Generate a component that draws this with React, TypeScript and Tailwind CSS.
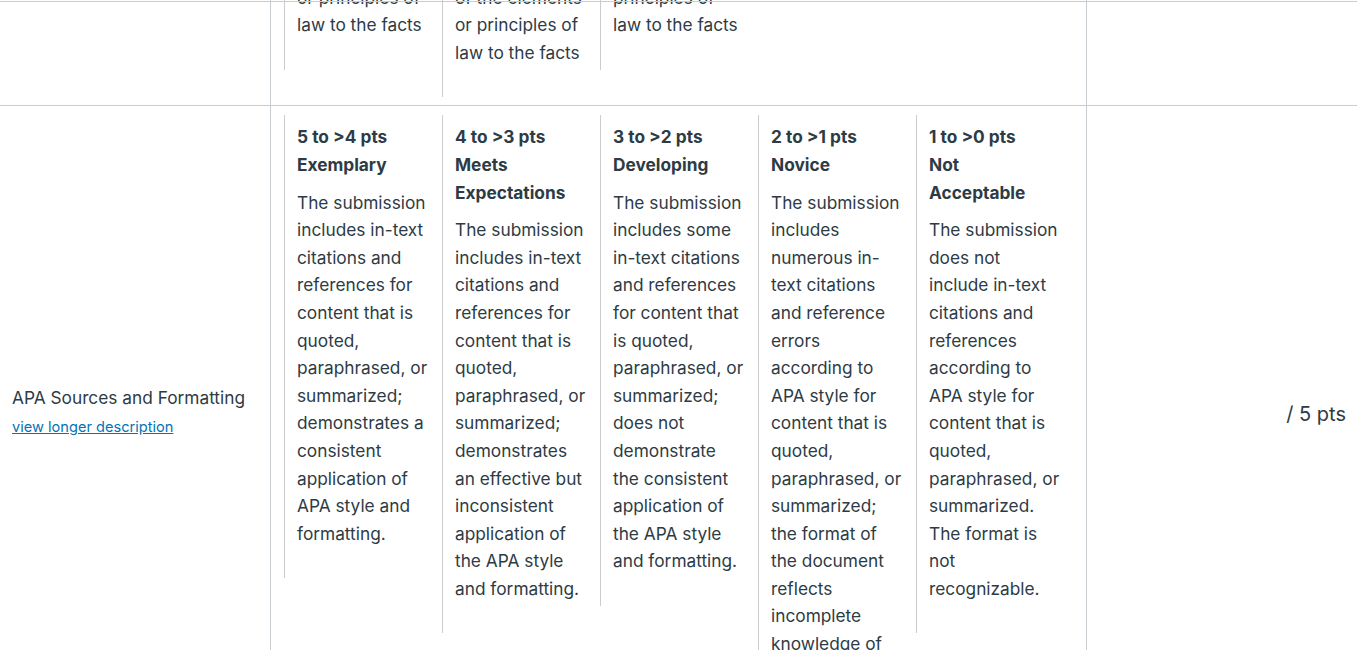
import React from 'react';

const topCells = [
    ['application of', 'or principles of', 'law to the facts'],
    ['application', 'of the elements', 'or principles of', 'law to the facts'],
    ['the elements or', 'principles of', 'law to the facts'],
];

const ratings = [
    {
        pts: '5 to >4 pts',
        title: 'Exemplary',
        desc: 'The submission includes in-text citations and references for content that is quoted, paraphrased, or summarized; demonstrates a consistent application of APA style and formatting.',
    },
    {
        pts: '4 to >3 pts',
        title: 'Meets Expectations',
        desc: 'The submission includes in-text citations and references for content that is quoted, paraphrased, or summarized; demonstrates an effective but inconsistent application of the APA style and formatting.',
    },
    {
        pts: '3 to >2 pts',
        title: 'Developing',
        desc: 'The submission includes some in-text citations and references for content that is quoted, paraphrased, or summarized; does not demonstrate the consistent application of the APA style and formatting.',
    },
    {
        pts: '2 to >1 pts',
        title: 'Novice',
        desc: 'The submission includes numerous in-text citations and reference errors according to APA style for content that is quoted, paraphrased, or summarized; the format of the document reflects incomplete knowledge of APA style.',
    },
    {
        pts: '1 to >0 pts',
        title: 'Not Acceptable',
        desc: 'The submission does not include in-text citations and references according to APA style for content that is quoted, paraphrased, or summarized. The format is not recognizable.',
    },
];

const App = () => {
    return (
        <div className="relative h-[650px] overflow-hidden bg-white text-[#2d3b45] font-['Inter',sans-serif]">
            {/* thin top rule */}
            <div className="absolute top-[1px] left-0 right-0 h-px bg-[#c7cdd1] z-10" />

            <div className="-mt-[61px]">
                {/* previous criterion (cut off) */}
                <div className="grid grid-cols-[271px_816px_1fr] border-b border-[#c7cdd1]">
                    <div className="border-r border-[#c7cdd1]" />
                    <div className="flex items-start pl-[13px] pr-3 pt-[9px] pb-2 border-r border-[#c7cdd1]">
                        {topCells.map((lines, i) => (
                            <div key={i} className="w-[158px] shrink-0 border-l border-[#c7cdd1] px-3 pt-2 pb-[31px] text-[17.3px] leading-[27.6px]">
                                {lines.map((l) => (
                                    <span key={l} className="block whitespace-nowrap">{l}</span>
                                ))}
                            </div>
                        ))}
                    </div>
                    <div />
                </div>

                {/* APA row */}
                <div className="grid grid-cols-[271px_816px_1fr] border-b border-[#c7cdd1]">
                    <div className="flex flex-col justify-center pl-3 pr-3 pb-1 border-r border-[#c7cdd1]">
                        <span className="text-[17.3px] leading-[28px]">APA Sources and Formatting</span>
                        <a href="#" className="text-[14.6px] leading-[30px] text-[#0374b5] underline">view longer description</a>
                    </div>
                    <div className="flex items-start pl-[13px] pr-3 pt-[9px] pb-2 border-r border-[#c7cdd1]">
                        {ratings.map((r) => (
                            <div key={r.pts} className="w-[158px] shrink-0 border-l border-[#c7cdd1] px-3 pt-2 pb-[31px] text-[17.3px] leading-[27.6px]">
                                <div className="font-bold">{r.pts}</div>
                                <div className="font-bold max-w-[120px] mb-[10px]">{r.title}</div>
                                <p>{r.desc}</p>
                            </div>
                        ))}
                    </div>
                    <div className="flex items-center justify-end pr-[11px] pb-[2px] text-[20px]">
                        / 5 pts
                    </div>
                </div>
            </div>
        </div>
    );
};

export default App;
